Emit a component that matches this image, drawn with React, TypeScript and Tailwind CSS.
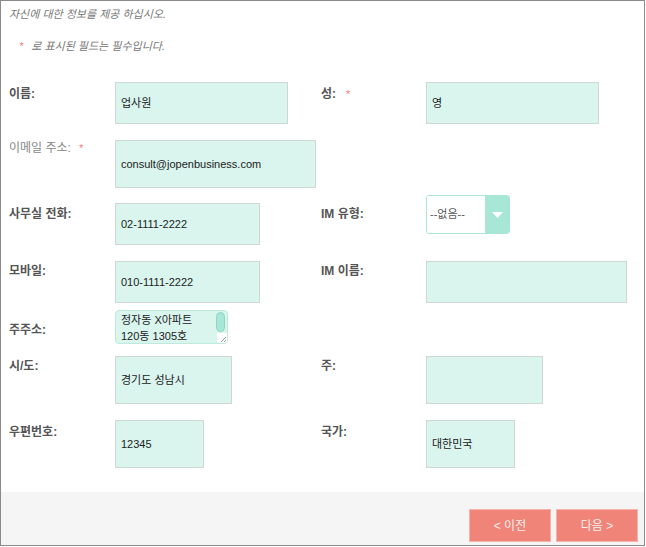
import React from "react";

const font = "font-['Liberation_Sans','Noto_Sans_CJK_KR',sans-serif]";

function Label({ children, className = "" }: { children: React.ReactNode; className?: string }) {
  return (
    <div className={`text-[12px] leading-[16px] font-bold text-[#555] ${className}`}>{children}</div>
  );
}

function Field({ value, className = "" }: { value?: string; className?: string }) {
  return (
    <div
      className={`flex items-center bg-[#d9f5ee] border border-[#cfd8d5] pl-[5px] text-[11px] text-[#222] ${className}`}
    >
      {value}
    </div>
  );
}

export default function App() {
  return (
    <div className={`w-[646px] h-[547px] bg-white ${font}`}>
      <div className="w-[645px] h-[546px] border border-[#8a8a8a] flex flex-col bg-white">
        <div className="pl-[8px]">
          <p className="mt-[5px] text-[11px] leading-[16px] italic text-[#777]">자신에 대한 정보를 제공 하십시오.</p>
          <p className="mt-[16px] text-[11px] leading-[16px] italic text-[#777] flex">
            <span className="ml-[10px] text-[#f08080]">*</span>
            <span className="ml-[8px]">로 표시된 필드는 필수입니다.</span>
          </p>

          {/* Row 1 */}
          <div className="mt-[28px] flex items-start">
            <div className="w-[312px] flex items-start">
              <Label className="w-[106px] mt-[4px]">이름:</Label>
              <Field value="업사원" className="w-[173px] h-[42px]" />
            </div>
            <div className="flex items-start">
              <Label className="w-[105px] mt-[4px] flex">
                <span>성:</span>
                <span className="ml-[10px] text-[#f08080] font-normal text-[11px]">*</span>
              </Label>
              <Field value="영" className="w-[173px] h-[42px]" />
            </div>
          </div>

          {/* Row 2 */}
          <div className="mt-[16px] flex items-start">
            <div className="w-[106px] mt-[0px] text-[12px] leading-[16px] text-[#888] flex">
              <span>이메일 주소:</span>
              <span className="ml-[8px] text-[#f08080] text-[11px]">*</span>
            </div>
            <Field value="consult@jopenbusiness.com" className="w-[201px] h-[48px]" />
          </div>

          {/* Row 3 */}
          <div className="mt-[7px] flex items-start">
            <div className="w-[312px] flex items-start">
              <Label className="w-[106px] mt-[11px]">사무실 전화:</Label>
              <Field value="02-1111-2222" className="w-[145px] h-[42px] mt-[8px]" />
            </div>
            <div className="flex items-start">
              <Label className="w-[105px] mt-[11px]">IM 유형:</Label>
              <div className="w-[84px] h-[39px] flex border border-[#a8e6d5] rounded-[3px] overflow-hidden">
                <div className="flex-1 flex items-center pl-[3px] text-[11px] text-[#555] bg-white">--없음--</div>
                <div className="w-[24px] bg-[#a8e6d5] flex items-center justify-center">
                  <svg width="11" height="6" viewBox="0 0 11 6">
                    <path d="M0 0 H11 L5.5 6 Z" fill="#fff" />
                  </svg>
                </div>
              </div>
            </div>
          </div>

          {/* Row 4 */}
          <div className="mt-[16px] flex items-start">
            <div className="w-[312px] flex items-start">
              <Label className="w-[106px] mt-[2px]">모바일:</Label>
              <Field value="010-1111-2222" className="w-[145px] h-[42px]" />
            </div>
            <div className="flex items-start">
              <Label className="w-[105px] mt-[2px]">IM 이름:</Label>
              <Field className="w-[201px] h-[42px]" />
            </div>
          </div>

          {/* Row 5 */}
          <div className="mt-[7px] flex items-start">
            <Label className="w-[106px] mt-[12px]">주주소:</Label>
            <div className="relative w-[113px] h-[34px] bg-[#d9f5ee] border border-[#bfe9dc] rounded-[4px] overflow-hidden pl-[5px] pt-[1px] text-[11px] leading-[16px] text-[#222]">
              <div>정자동 X아파트</div>
              <div>120동 1305호</div>
              <div className="absolute right-[2px] top-[1px] w-[9px] h-[20px] rounded-full bg-[#a8e6d5] border border-[#8fd5c2]" />
              <div className="absolute right-0 bottom-0 w-[10px] h-[10px] bg-white flex items-end justify-end">
                <svg width="8" height="8" viewBox="0 0 8 8">
                  <path d="M7 2 L2 7 M7 5 L5 7" stroke="#999" strokeWidth="1" />
                </svg>
              </div>
            </div>
          </div>

          {/* Row 6 */}
          <div className="mt-[12px] flex items-start">
            <div className="w-[312px] flex items-start">
              <Label className="w-[106px] mt-[2px]">시/도:</Label>
              <Field value="경기도 성남시" className="w-[117px] h-[48px]" />
            </div>
            <div className="flex items-start">
              <Label className="w-[105px] mt-[2px]">주:</Label>
              <Field className="w-[117px] h-[48px]" />
            </div>
          </div>

          {/* Row 7 */}
          <div className="mt-[16px] flex items-start">
            <div className="w-[312px] flex items-start">
              <Label className="w-[106px] mt-[4px]">우편번호:</Label>
              <Field value="12345" className="w-[89px] h-[48px]" />
            </div>
            <div className="flex items-start">
              <Label className="w-[105px] mt-[4px]">국가:</Label>
              <Field value="대한민국" className="w-[89px] h-[48px]" />
            </div>
          </div>
        </div>

        {/* Footer */}
        <div className="mt-auto h-[53px] bg-[#f5f5f5] flex justify-end items-start pt-[17px] pr-[6px] gap-[5px]">
          <button className="w-[82px] h-[33px] bg-[#f08478] border border-[#f4b3ab] text-[12px] text-[#fff0ee] flex items-center justify-center">
            &lt; 이전
          </button>
          <button className="w-[82px] h-[33px] bg-[#f08478] border border-[#f4b3ab] text-[12px] text-[#fff0ee] flex items-center justify-center">
            다음 &gt;
          </button>
        </div>
      </div>
    </div>
  );
}
